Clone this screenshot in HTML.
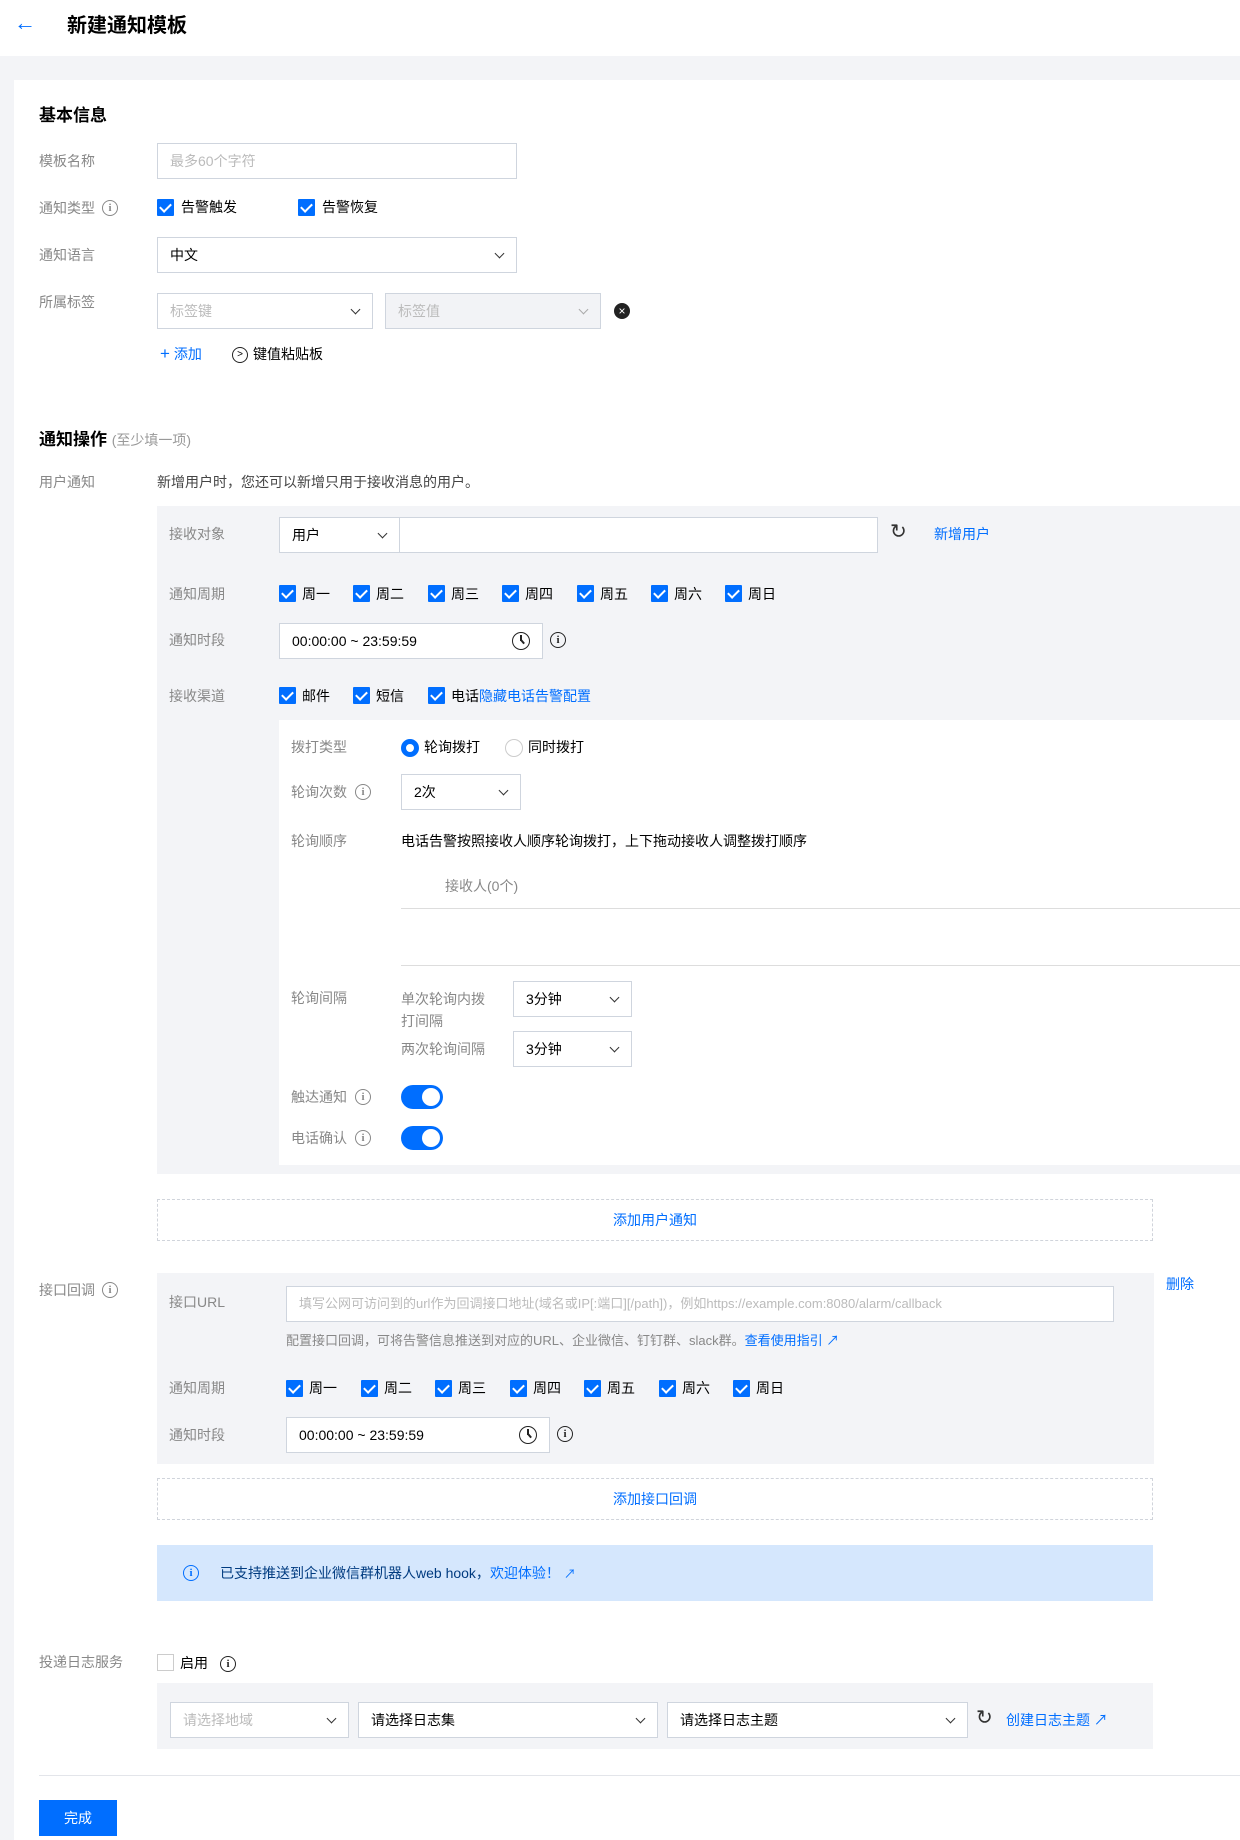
<!DOCTYPE html>
<html><head><meta charset="utf-8">
<style>
*{box-sizing:border-box;margin:0;padding:0}
body{width:1240px;height:1840px;position:relative;background:#f3f4f7;font-family:"Liberation Sans","Noto Sans CJK SC",sans-serif;font-size:14px;color:#000;overflow:hidden}
.a{position:absolute}
.t{position:absolute;line-height:20px;white-space:nowrap}
.lb{color:#888}
.blue{color:#006eff}
.inp{position:absolute;background:#fff;border:1px solid #cfd5de;height:36px;line-height:34px;padding-left:12px;white-space:nowrap}
.ph{color:#bbb}
.dis{background:#f2f3f6;color:#bbb}
.arr{position:absolute;right:13px;top:12px;width:7px;height:7px;border-right:1.6px solid #333;border-bottom:1.6px solid #333;transform:rotate(45deg)}
.arr.l{border-color:#aaa}
.cb{position:absolute;width:17px;height:17px;background:#006eff;border-radius:1px}
.cb:after{content:"";position:absolute;left:5px;top:1.5px;width:5px;height:9px;border-right:2px solid #fff;border-bottom:2px solid #fff;transform:rotate(45deg)}
.gray{position:absolute;background:#f3f4f7}
.info{position:absolute;width:16px;height:16px;border:1.3px solid #888;border-radius:50%;font:bold 11px/14px "Liberation Serif",serif;text-align:center;color:#888}
.info.dk{border-color:#222;color:#222}
.clk:before{content:"";position:absolute;left:7px;top:2px;width:1.5px;height:6px;background:#222}
.clk:after{content:"";position:absolute;left:7px;top:7px;width:1.5px;height:5px;background:#222;transform-origin:top;transform:rotate(-40deg)}
.dash{position:absolute;border:1px dashed #d0d4db;background:#fff;text-align:center;color:#006eff;line-height:40px}
.tog{position:absolute;width:42px;height:24px;background:#006eff;border-radius:12px}
.tog:after{content:"";position:absolute;right:3px;top:3px;width:18px;height:18px;border-radius:50%;background:#fff}
</style></head><body>
<div class="a" style="left:0;top:0;width:1240px;height:56px;background:#fff"></div>
<div class="t blue" style="left:14px;top:13px;font-size:22px">&#8592;</div>
<div class="t" style="left:67px;top:14px;font-size:20px;font-weight:bold;line-height:24px">新建通知模板</div>
<div class="a" style="left:14px;top:80px;width:1226px;height:1760px;background:#fff"></div>

<div class="t" style="left:39px;top:106px;font-size:17px;font-weight:bold">基本信息</div>
<div class="t lb" style="left:39px;top:151px">模板名称</div>
<div class="inp ph" style="left:157px;top:143px;width:360px">最多60个字符</div>
<div class="t lb" style="left:39px;top:198px">通知类型</div><div class="info" style="left:102px;top:200px">i</div>
<div class="cb" style="left:157px;top:199px"></div><div class="t" style="left:181px;top:197px">告警触发</div>
<div class="cb" style="left:298px;top:199px"></div><div class="t" style="left:322px;top:197px">告警恢复</div>
<div class="t lb" style="left:39px;top:245px">通知语言</div>
<div class="inp" style="left:157px;top:237px;width:360px">中文<span class="arr"></span></div>
<div class="t lb" style="left:39px;top:292px">所属标签</div>
<div class="inp ph" style="left:157px;top:293px;width:216px">标签键<span class="arr"></span></div>
<div class="inp dis" style="left:385px;top:293px;width:216px">标签值<span class="arr l"></span></div>
<div class="a" style="left:614px;top:303px;width:16px;height:16px;border-radius:50%;background:#222;color:#fff;font-size:12px;line-height:16px;text-align:center">×</div>
<div class="t blue" style="left:160px;top:344px"><b style="font-size:17px;font-weight:normal">+</b> 添加</div>
<div class="a" style="left:232px;top:347px;width:16px;height:16px;border:1.4px solid #222;border-radius:50%;font-size:10px;line-height:13px;text-align:center">&gt;</div>
<div class="t" style="left:253px;top:344px">键值粘贴板</div>

<div class="t" style="left:39px;top:430px;font-size:17px;font-weight:bold">通知操作 <span style="font-size:14px;font-weight:normal;color:#999">(至少填一项)</span></div>
<div class="t lb" style="left:39px;top:472px">用户通知</div>
<div class="t" style="left:157px;top:472px;color:#444">新增用户时，您还可以新增只用于接收消息的用户。</div>

<div class="gray" style="left:157px;top:506px;width:1083px;height:668px"></div>
<div class="t lb" style="left:169px;top:524px">接收对象</div>
<div class="inp" style="left:279px;top:517px;width:121px">用户<span class="arr"></span></div>
<div class="inp" style="left:399px;top:517px;width:479px"></div>
<div class="t" style="left:890px;top:522px;font-size:20px;color:#333">&#8635;</div>
<div class="t blue" style="left:934px;top:524px">新增用户</div>
<div class="t lb" style="left:169px;top:584px">通知周期</div>
<div class="cb" style="left:279px;top:585px"></div><div class="t" style="left:302px;top:584px">周一</div>
<div class="cb" style="left:353px;top:585px"></div><div class="t" style="left:376px;top:584px">周二</div>
<div class="cb" style="left:428px;top:585px"></div><div class="t" style="left:451px;top:584px">周三</div>
<div class="cb" style="left:502px;top:585px"></div><div class="t" style="left:525px;top:584px">周四</div>
<div class="cb" style="left:577px;top:585px"></div><div class="t" style="left:600px;top:584px">周五</div>
<div class="cb" style="left:651px;top:585px"></div><div class="t" style="left:674px;top:584px">周六</div>
<div class="cb" style="left:725px;top:585px"></div><div class="t" style="left:748px;top:584px">周日</div>
<div class="t lb" style="left:169px;top:630px">通知时段</div>
<div class="inp" style="left:279px;top:623px;width:264px">00:00:00 ~ 23:59:59</div>
<div class="info dk clk" style="left:512px;top:632px;width:18px;height:18px"></div>
<div class="info dk" style="left:550px;top:632px">i</div>
<div class="t lb" style="left:169px;top:686px">接收渠道</div>
<div class="cb" style="left:279px;top:687px"></div><div class="t" style="left:302px;top:686px">邮件</div>
<div class="cb" style="left:353px;top:687px"></div><div class="t" style="left:376px;top:686px">短信</div>
<div class="cb" style="left:428px;top:687px"></div><div class="t" style="left:451px;top:686px">电话<span class="blue">隐藏电话告警配置</span></div>

<div class="a" style="left:279px;top:720px;width:961px;height:445px;background:#fff"></div>
<div class="t lb" style="left:291px;top:737px">拨打类型</div>
<div class="a" style="left:401px;top:739px;width:18px;height:18px;border:5px solid #006eff;border-radius:50%"></div>
<div class="t" style="left:424px;top:737px">轮询拨打</div>
<div class="a" style="left:505px;top:739px;width:18px;height:18px;border:1px solid #ccc;border-radius:50%"></div>
<div class="t" style="left:528px;top:737px">同时拨打</div>
<div class="t lb" style="left:291px;top:782px">轮询次数</div><div class="info" style="left:355px;top:784px">i</div>
<div class="inp" style="left:401px;top:774px;width:120px">2次<span class="arr"></span></div>
<div class="t lb" style="left:291px;top:831px">轮询顺序</div>
<div class="t" style="left:401px;top:831px">电话告警按照接收人顺序轮询拨打，上下拖动接收人调整拨打顺序</div>
<div class="t" style="left:445px;top:876px;color:#888">接收人(0个)</div>
<div class="a" style="left:401px;top:908px;width:839px;height:1px;background:#ddd"></div>
<div class="a" style="left:401px;top:965px;width:839px;height:1px;background:#ddd"></div>
<div class="t lb" style="left:291px;top:988px">轮询间隔</div>
<div class="t lb" style="left:401px;top:988px;line-height:22px">单次轮询内拨<br>打间隔</div>
<div class="inp" style="left:513px;top:981px;width:119px">3分钟<span class="arr"></span></div>
<div class="t lb" style="left:401px;top:1039px">两次轮询间隔</div>
<div class="inp" style="left:513px;top:1031px;width:119px">3分钟<span class="arr"></span></div>
<div class="t lb" style="left:291px;top:1087px">触达通知</div><div class="info" style="left:355px;top:1089px">i</div>
<div class="tog" style="left:401px;top:1085px"></div>
<div class="t lb" style="left:291px;top:1128px">电话确认</div><div class="info" style="left:355px;top:1130px">i</div>
<div class="tog" style="left:401px;top:1126px"></div>

<div class="dash" style="left:157px;top:1199px;width:996px;height:42px">添加用户通知</div>

<div class="t lb" style="left:39px;top:1280px">接口回调</div><div class="info" style="left:102px;top:1282px">i</div>
<div class="gray" style="left:157px;top:1273px;width:997px;height:191px"></div>
<div class="t blue" style="left:1166px;top:1274px">删除</div>
<div class="t lb" style="left:169px;top:1292px">接口URL</div>
<div class="inp ph" style="left:286px;top:1286px;width:828px;font-size:13px">填写公网可访问到的url作为回调接口地址(域名或IP[:端口][/path])，例如https://example.com:8080/alarm/callback</div>
<div class="t" style="left:286px;top:1331px;color:#888;font-size:13px">配置接口回调，可将告警信息推送到对应的URL、企业微信、钉钉群、slack群。<span class="blue">查看使用指引 ↗</span></div>
<div class="t lb" style="left:169px;top:1378px">通知周期</div>
<div class="cb" style="left:286px;top:1380px"></div><div class="t" style="left:309px;top:1378px">周一</div>
<div class="cb" style="left:361px;top:1380px"></div><div class="t" style="left:384px;top:1378px">周二</div>
<div class="cb" style="left:435px;top:1380px"></div><div class="t" style="left:458px;top:1378px">周三</div>
<div class="cb" style="left:510px;top:1380px"></div><div class="t" style="left:533px;top:1378px">周四</div>
<div class="cb" style="left:584px;top:1380px"></div><div class="t" style="left:607px;top:1378px">周五</div>
<div class="cb" style="left:659px;top:1380px"></div><div class="t" style="left:682px;top:1378px">周六</div>
<div class="cb" style="left:733px;top:1380px"></div><div class="t" style="left:756px;top:1378px">周日</div>
<div class="t lb" style="left:169px;top:1425px">通知时段</div>
<div class="inp" style="left:286px;top:1417px;width:264px">00:00:00 ~ 23:59:59</div>
<div class="info dk clk" style="left:519px;top:1426px;width:18px;height:18px"></div>
<div class="info dk" style="left:557px;top:1426px">i</div>

<div class="dash" style="left:157px;top:1478px;width:996px;height:42px">添加接口回调</div>

<div class="a" style="left:157px;top:1545px;width:996px;height:56px;background:#d5e7fd"></div>
<div class="info" style="left:183px;top:1565px;border-color:#006eff;color:#006eff">i</div>
<div class="t" style="left:220px;top:1563px;color:#003b80">已支持推送到企业微信群机器人web hook，<span class="blue">欢迎体验！</span> <span class="blue" style="font-size:12px">↗</span></div>

<div class="t lb" style="left:39px;top:1652px">投递日志服务</div>
<div class="a" style="left:157px;top:1654px;width:17px;height:17px;border:1px solid #ccc;background:#fff"></div>
<div class="t" style="left:180px;top:1653px">启用</div>
<div class="info dk" style="left:220px;top:1656px">i</div>
<div class="gray" style="left:157px;top:1683px;width:996px;height:66px"></div>
<div class="inp ph" style="left:170px;top:1702px;width:179px">请选择地域<span class="arr"></span></div>
<div class="inp" style="left:358px;top:1702px;width:300px">请选择日志集<span class="arr"></span></div>
<div class="inp" style="left:667px;top:1702px;width:301px">请选择日志主题<span class="arr"></span></div>
<div class="t" style="left:976px;top:1708px;font-size:20px;color:#333">&#8635;</div>
<div class="t blue" style="left:1006px;top:1710px">创建日志主题 ↗</div>

<div class="a" style="left:39px;top:1775px;width:1201px;height:1px;background:#e3e5ea"></div>
<div class="a" style="left:39px;top:1800px;width:78px;height:36px;background:#006eff;color:#fff;text-align:center;line-height:36px">完成</div>
</body></html>
